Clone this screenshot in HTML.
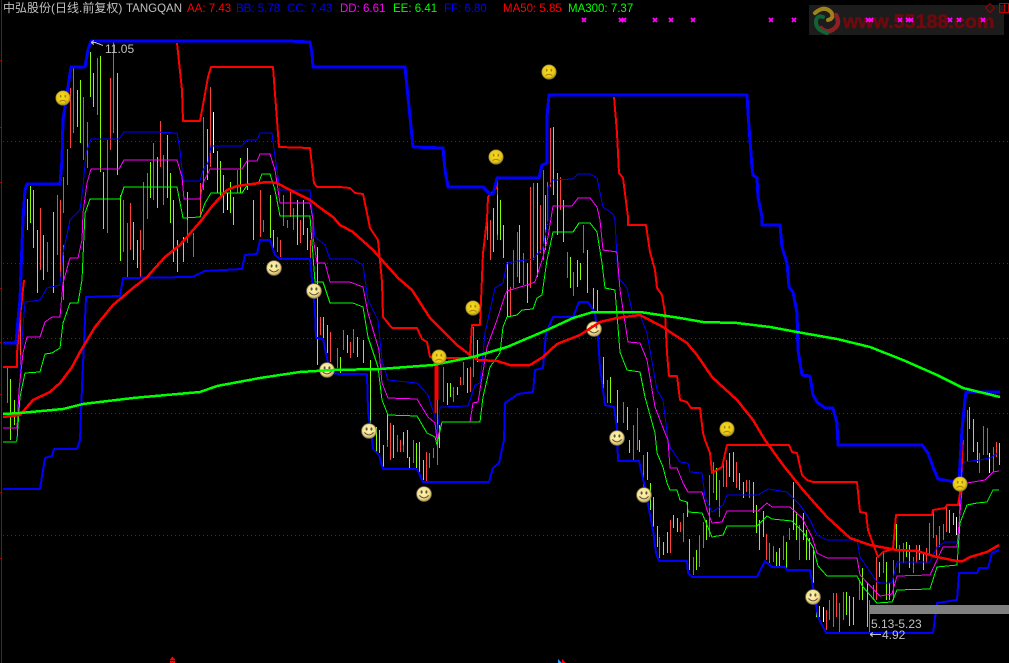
<!DOCTYPE html>
<html lang="zh">
<head>
<meta charset="utf-8">
<title>中弘股份 TANGQAN</title>
<style>
html,body{margin:0;padding:0;background:#000;width:1009px;height:663px;overflow:hidden}
svg{display:block;position:absolute;left:0;top:0}
text{font-family:"Liberation Sans","Noto Sans CJK SC",sans-serif;font-size:12px}
</style>
</head>
<body>
<svg width="1009" height="663" viewBox="0 0 1009 663" xmlns="http://www.w3.org/2000/svg">
<defs>
<radialGradient id="hg" cx="45%" cy="40%" r="60%"><stop offset="0" stop-color="#fff6b0"/><stop offset=".7" stop-color="#f4e08a"/><stop offset="1" stop-color="#b89a50"/></radialGradient>
<radialGradient id="sg" cx="45%" cy="40%" r="60%"><stop offset="0" stop-color="#f8dc20"/><stop offset=".75" stop-color="#e8c414"/><stop offset="1" stop-color="#a08a20"/></radialGradient>
<symbol id="happy" viewBox="-8 -8 16 16" width="16" height="16" overflow="visible">
<circle r="7.4" fill="url(#hg)" stroke="#807860" stroke-width=".8"/>
<ellipse cx="-2.4" cy="-2" rx="1" ry="1.6" fill="#5a5240"/><ellipse cx="2.4" cy="-2" rx="1" ry="1.6" fill="#5a5240"/>
<path d="M-4.6 1.4Q0 6.4 4.6 1.4" fill="none" stroke="#5a5240" stroke-width="1"/>
</symbol>
<symbol id="sad" viewBox="-8 -8 16 16" width="16" height="16" overflow="visible">
<circle r="7.2" fill="url(#sg)" stroke="#8a8040" stroke-width=".7"/>
<ellipse cx="-2.3" cy="-1.8" rx=".9" ry="1.4" fill="#a08a10"/><ellipse cx="2.3" cy="-1.8" rx=".9" ry="1.4" fill="#a08a10"/>
<path d="M-3.4 3.6Q0 1 3.4 3.6" fill="none" stroke="#a08a10" stroke-width="1"/>
</symbol>
</defs>
<rect width="1009" height="663" fill="#000"/>

<!-- left axis -->
<path d="M1.5 0V663M0 60.500H2M0 127.500H2M0 182.500H2M0 288.500H2M0 342.500H2M0 394.500H2M0 492.500H2M0 558.500H2" stroke="#a80000" stroke-width="1" shape-rendering="crispEdges"/>

<!-- dotted grid -->
<path d="M3 141.500H1009M3 263.500H1009M3 338.500H1009M3 413.500H1009M3 535.500H1009" stroke="#8a1010" stroke-width="1" stroke-dasharray="1 3" shape-rendering="crispEdges"/>

<!-- watermark -->
<rect x="809" y="5" width="195" height="30" fill="#1c1c1c"/>
<g fill="none" stroke-linecap="round">
<path d="M815 13Q824 5 831 12Q835 18 828 20" stroke="#a0821a" stroke-width="4"/>
<path d="M836 15Q842 26 830 31Q824 32 821 28" stroke="#8e2024" stroke-width="4.5"/>
<path d="M827 33Q815 30 816 20Q818 15 823 17" stroke="#126236" stroke-width="4"/>
</g>
<text x="843" y="28" fill="#6e0a0e" stroke="#6e0a0e" stroke-width=".5" style="font-size:19.700px;font-weight:bold">www.55188.com</text>

<!-- candles -->
<g transform="translate(.5 0)" fill="none" stroke-width="1" shape-rendering="crispEdges">
<path stroke="#ff4038" d="M7 367V403M20 313V367M40 208V270M47 242V272M57 195V255M60 200V280M63 177V213M63 245V300M67 149V185M70 88V148M73 68V133M83 97V160M87 122V168M97 58V115M107 140V233M110 78V150M113 42V133M123 200V252M127 223V277M130 203V250M140 230V277M143 182V250M147 173V219M153 143V200M160 121V167M163 155V205M187 205V243M193 233V257M200 183V217M203 117V190M210 87V167M237 170V193M260 190V237M263 220V232M277 237V252M280 240V257M283 195V226M287 220V228M290 192V217M293 208V230M300 220V243M310 240V258M320 317V335M330 332V362M337 348V368M343 330V350M350 342V358M353 329V353M390 423V460M397 435V452M387 440V447M400 440V452M403 440V452M413 440V463M426 452V481M429 453V468M433 448V458M437 380V465M443 367V402M453 387V402M460 377V385M463 362V385M470 367V392M473 327V377M487 197V240M490 220V260M497 187V240M510 287V317M513 250V288M517 232V277M523 253V285M530 187V288M533 183V260M540 205V253M543 170V260M547 182V225M550 128V187M560 177V210M567 252V278M573 272V296M583 225V253M607 380V403M623 402V423M633 425V460M637 408V450M643 455V487M659 537V558M670 520V553M680 522V532M683 513V542M693 557V575M699 535V567M703 522V548M709 475V537M713 462V493M719 480V517M723 457V487M726 460V487M736 462V488M746 480V492M749 480V498M766 534V560M769 543V563M773 546V562M783 536V560M789 528V540M799 525V560M826 610V630M829 600V620M833 593V627M836 593V617M839 603V633M843 592V620M859 580V600M869 600V633M873 585V600M876 557V600M883 553V573M893 560V600M899 545V573M903 543V563M913 557V573M916 545V563M926 548V563M929 523V555M933 510V538M936 535V557M939 526V547M943 524V540M946 505V532M959 490V533M967 410V462M979 453V473M983 426V455M987 428V455M993 447V472M996 442V457"/>
<path stroke="#80ff00" d="M10 379V440M14 400V425M27 199V230M30 186V223M33 190V248M37 230V293M43 235V280M53 212V293M77 90V127M80 80V143M90 52V97M93 73V107M100 56V172M103 172V229M117 73V175M120 195V261M133 222V260M137 240V268M150 162V198M157 157V208M167 135V198M170 173V223M173 200V262M177 240V272M183 237V262M187 192V220M207 129V180M217 151V193M220 161V197M223 175V213M230 182V213M233 197V225M240 158V193M247 148V190M253 200V240M270 195V238M273 230V253M297 200V245M303 200V235M307 228V250M317 247V365M323 317V338M327 325V353M340 357V375M347 335V353M357 337V357M363 340V363M370 360V423M376 427V453M379 430V453M383 445V467M387 413V440M393 425V458M403 432V445M407 430V458M409 457V469M416 443V468M419 442V472M423 460V480M439 425V448M447 383V405M450 383V397M457 387V395M467 368V393M477 340V362M493 208V252M497 195V235M500 200V240M503 225V258M507 262V317M519 225V283M527 263V303M537 183V277M545 195V250M553 127V195M557 173V235M563 200V242M570 257V288M577 260V287M580 263V280M587 250V293M593 288V313M597 290V313M603 357V393M610 377V403M617 390V423M627 407V430M629 440V453M639 440V452M647 452V480M650 483V510M653 497V527M657 526V547M663 542V555M667 532V553M673 515V528M677 518V532M687 502V517M689 539V570M696 550V570M706 520V540M716 468V500M729 453V477M733 452V482M739 473V490M743 482V498M753 482V513M756 505V533M759 520V550M763 511V537M776 552V566M779 548V566M786 542V568M793 482V530M796 512V540M803 513V540M806 530V560M809 538V560M813 547V583M816 603V617M819 606V617M846 592V615M849 596V626M853 597V625M862 568V600M867 583V627M879 562V577M886 562V600M889 583V600M896 524V550M906 542V557M909 545V568M919 545V560M923 553V570M949 510V533M953 513V525M969 407V429M973 419V452M977 442V463M999 443V465"/>
<path stroke="#ffffff" d="M213 112V153M227 193V210M823 607V622M956 517V535M989 453V473"/>
</g>

<!-- thin channel lines -->
<g fill="none" stroke-linejoin="round" shape-rendering="crispEdges">
<polyline stroke="#0000ff" stroke-width="1" points="17,440 22,340 25,302 40,300 47,288 60,285 63,253 68,230 70,220 80,210 83,187 86,153 91,139 119,139 124,132 155,132 177,133 180,150 183,181 200,181 203,170 208,163 211,146 242,146 247,140 257,140 260,133 272,133 275,157 280,190 310,190 313,220 315,237 325,245 330,259 353,259 363,265 368,300 378,320 382,360 388,380 417,383 428,395 435,417 437,437 440,407 468,406 475,385 480,383 485,333 495,288 503,283 507,263 518,261 533,259 543,248 548,220 548,187 553,180 573,179 578,174 590,174 597,178 603,207 613,214 615,220 618,277 627,288 633,315 640,315 647,333 657,390 663,400 668,440 670,447 680,462 688,463 690,472 702,473 705,497 712,512 723,505 727,495 758,495 768,489 787,492 800,505 810,520 817,535 827,540 857,540 860,557 877,582 880,583 892,583 897,562 930,562 937,547 945,542 958,542 963,462 980,460 990,458 998,453"/>
<polyline stroke="#ff00ff" stroke-width="1" points="3,428 17,428 19,390 23,353 27,337 40,337 45,322 52,317 60,317 63,283 70,258 78,258 82,240 83,213 87,183 91,169 119,169 124,160 177,160 182,177 184,199 200,199 203,183 210,169 242,169 247,161 257,161 260,154 270,154 275,170 280,203 310,203 313,220 313,237 317,263 325,263 330,282 350,282 363,287 368,313 379,350 382,383 388,398 417,399 428,417 435,423 437,440 442,422 470,422 473,403 478,402 487,347 497,320 505,295 507,291 517,288 527,285 535,282 543,257 548,237 553,206 572,206 578,198 590,198 597,207 600,220 603,250 617,252 620,290 628,342 640,343 647,360 655,407 665,433 668,440 670,468 677,468 683,483 688,492 702,492 707,510 712,523 722,522 727,511 758,511 767,503 772,507 790,507 802,518 812,537 817,553 827,558 857,558 860,575 877,593 880,596 892,594 897,576 930,575 937,560 943,547 957,547 962,490 967,483 985,480 993,472 999,471"/>
<polyline stroke="#00ff00" stroke-width="1" points="3,442 16,442 17,440 20,397 25,373 40,372 45,354 52,353 60,348 63,323 70,303 78,303 82,280 85,213 90,199 120,199 124,187 177,187 183,218 200,217 205,203 211,193 242,193 248,184 258,184 262,174 270,174 275,190 280,216 310,216 315,282 323,282 330,303 353,303 363,307 368,337 378,367 382,400 388,415 417,416 427,433 435,437 437,445 442,422 472,422 480,422 483,397 490,367 500,353 503,327 507,317 517,315 522,310 533,309 537,298 542,295 547,260 553,232 573,232 579,223 590,223 597,232 602,263 605,288 615,290 620,352 627,370 640,372 645,397 655,433 657,453 663,467 667,483 670,490 677,490 680,500 687,502 688,512 702,513 712,537 723,535 727,526 757,526 767,516 772,519 792,521 803,532 813,547 818,566 827,576 857,576 863,587 877,603 892,602 897,590 930,589 937,567 957,565 960,523 967,505 977,503 987,502 993,490 999,490"/>

<!-- stepped red -->
<polyline stroke="#ff0000" stroke-width="2" points="3,367 17,367 17,353 20,317 24,280"/>
<polyline stroke="#ff0000" stroke-width="2" points="177,43 182,90 183,121 200,121 203,105 208,77 211,67 273,67 279,147 310,148 314,183 317,187 340,187 350,188 355,193 363,194 368,218 370,228 378,240 382,282 383,317 392,328 417,328 422,339 427,342 430,357 435,358 458,358 470,358 470,355 472,325 480,325 483,253 487,220 488,197 497,187 497,178"/>
<path d="M435.500 358V413M437.500 358V400" stroke="#ff0000" stroke-width="2"/>
<polyline stroke="#ff0000" stroke-width="2" points="614,97 617,133 619,173 623,178 628,217 628,225 646,225 650,252 655,270 657,288 662,295 665,313 667,353 669,376 677,376 680,400 687,402 691,408 700,408 703,433 705,440 710,453 712,473 722,467 727,445 789,445 792,452 797,453 802,475 807,480 813,482 857,482 860,512 866,513 868,530 878,557 883,552 893,549 896,515 932,515 933,510 945,508 947,505 958,505 960,493 962,460 963,440"/>

<!-- medium blue -->
<polyline stroke="#0000ff" stroke-width="2" points="3,489 40,489 45,458 52,456 54,449 77,449 80,440 82,387 85,320 86,297 120,296 123,278 192,277 205,271 242,269 245,255 257,254 260,240 270,240 275,255 280,259 310,259 315,310 316,338 323,339 328,363 333,373 340,374 367,374 368,410 370,427 372,440 373,449 379,455 383,469 417,469 423,482 489,482 493,468 499,463 504,440 505,403 518,394 533,392 535,370 543,368 546,333 553,317 573,317 579,302 588,302 595,313 598,337 600,367 605,405 614,407 617,428 618,461 639,461 644,483 653,530 656,553 659,561 687,561 688,573 692,577 757,577 765,561 772,567 785,567 787,570 810,570 813,587 818,617 826,633 933,633 937,603 957,600 959,573 977,573 979,568 988,568 992,553 999,550"/>
<!-- thick blue -->
<polyline stroke="#0000ff" stroke-width="3" points="3,343 16,343 18,320 20,300 21,270 23,220 25,190 27,184 60,184 62,160 63,120 68,87 71,67 85,67 88,50 91,41 288,41 310,42 312,53 313,67 405,67 407,87 410,117 413,147 443,148 445,170 448,187 483,187 490,194 493,194 497,178 539,178 542,165 547,163 547,117 549,95 747,95 748,113 750,140 752,167 753,175 757,178 758,197 762,217 762,225 780,225 782,247 787,263 789,287 793,292 797,313 798,350 802,375 810,376 813,395 817,402 825,408 833,408 837,423 838,445 922,445 928,453 933,467 938,479 950,481 959,483 960,463 962,430 965,400 966,392 1000,392"/>
</g>

<!-- happy faces -->
<use href="#happy" x="266" y="260"/>
<use href="#happy" x="306" y="283"/>
<use href="#happy" x="319" y="362"/>
<use href="#happy" x="361" y="423"/>
<use href="#happy" x="416" y="486"/>
<use href="#happy" x="586" y="321"/>
<use href="#happy" x="609" y="430"/>
<use href="#happy" x="636" y="487"/>
<use href="#happy" x="805" y="589"/>

<!-- moving averages -->
<g fill="none" stroke-linejoin="round" shape-rendering="crispEdges">
<polyline stroke="#ff0000" stroke-width="2.500" points="3,417 20,415 33,400 50,392 60,383 72,367 80,352 95,327 113,305 133,288 147,277 165,257 180,245 200,222 213,205 227,190 237,186 267,182 277,183 290,190 310,200 323,210 333,217 340,225 353,232 373,250 398,278 412,290 430,318 457,345 470,355 478,360 497,361 510,365 530,365 543,357 557,344 580,335 600,322 617,318 640,315 663,327 670,332 687,343 697,355 712,377 737,400 753,420 765,440 783,465 803,490 827,517 850,538 870,545 897,550 917,551 937,557 957,561 963,561 970,557 987,552 999,545"/>
<polyline stroke="#00ff00" stroke-width="2.500" points="3,414 20,413 63,409 83,404 133,398 200,392 217,386 260,378 300,372 333,370 380,369 433,365 473,357 507,347 547,330 573,318 593,312 640,312 680,318 703,322 737,323 770,327 797,332 837,339 870,347 903,360 937,375 963,388 1000,397"/>
</g>

<!-- sad faces -->
<use href="#sad" x="55" y="90"/>
<use href="#sad" x="541" y="64"/>
<use href="#sad" x="488" y="149"/>
<use href="#sad" x="465" y="300"/>
<use href="#sad" x="431" y="349"/>
<use href="#sad" x="719" y="421"/>
<use href="#sad" x="952" y="476"/>

<!-- magenta x markers -->
<path stroke="#ff00ff" stroke-width="1.600" fill="none" shape-rendering="crispEdges" d="M582 18l4 4m0-4l-4 4M619 18l4 4m0-4l-4 4M622 18l4 4m0-4l-4 4M653 18l4 4m0-4l-4 4M669 18l4 4m0-4l-4 4M691 18l4 4m0-4l-4 4M769 18l4 4m0-4l-4 4M792 18l4 4m0-4l-4 4M866 18l4 4m0-4l-4 4M869 18l4 4m0-4l-4 4M898 18l4 4m0-4l-4 4M906 18l4 4m0-4l-4 4M909 18l4 4m0-4l-4 4M948 18l4 4m0-4l-4 4M957 18l4 4m0-4l-4 4M981 18l4 4m0-4l-4 4"/>

<!-- top right buttons -->
<path d="M990 3.500L994.500 8 990 12.500 985.500 8Z" fill="none" stroke="#a00000" stroke-width="1"/>
<path d="M999.500 3.500H1008.500V12.500H999.500ZM1004.500 3.500V12.500" fill="none" stroke="#c00000" stroke-width="1" shape-rendering="crispEdges"/>

<!-- header text -->
<text x="3" y="12" fill="#c0c0c0" style="font-size:12px">中弘股份(日线.前复权)</text>
<text x="126" y="12" fill="#c0c0c0" style="font-size:11.500px">TANGQAN</text>
<text x="187" y="12" fill="#ff0000" style="font-size:11.500px">AA: 7.43</text>
<text x="236" y="12" fill="#0000ff" style="font-size:11.500px">BB: 5.78</text>
<text x="287" y="12" fill="#0000ff" style="font-size:11.500px">CC: 7.43</text>
<text x="340" y="12" fill="#ff00ff" style="font-size:11.500px">DD: 6.61</text>
<text x="393" y="12" fill="#00ff00" style="font-size:11.500px">EE: 6.41</text>
<text x="444" y="12" fill="#0000ff" style="font-size:11.500px">FF: 6.80</text>
<text x="503" y="12" fill="#ff0000" style="font-size:11.500px">MA50: 5.85</text>
<text x="568" y="12" fill="#00ff00" style="font-size:11.500px">MA300: 7.37</text>

<!-- high marker -->
<path d="M91 42.500H95L103 45.500M91 42.500L94 40.500M91 42.500L94 44.500" fill="none" stroke="#c0c0c0" stroke-width="1" shape-rendering="crispEdges"/>
<text x="105" y="53" fill="#c0c0c0" style="font-size:12px">11.05</text>

<!-- low marker -->
<rect x="869" y="605" width="140" height="9" fill="#808080"/>
<text x="871" y="628" fill="#c0c0c0" style="font-size:12px">5.13-5.23</text>
<path d="M870 634.500H881M870 634.500L873 632.500M870 634.500L873 636.500" fill="none" stroke="#c0c0c0" stroke-width="1" shape-rendering="crispEdges"/>
<text x="882" y="639" fill="#c0c0c0" style="font-size:12px">4.92</text>

<!-- bottom markers -->
<path d="M172.500 656.500L175.500 660H169.500ZM170 660.500H175V663H170Z" fill="#ff0000"/>
<path d="M558 659L562 663H558Z" fill="#20a0ff"/>
<path d="M562 659L566 663H562Z" fill="#ff0000"/>
</svg>
</body>
</html>
